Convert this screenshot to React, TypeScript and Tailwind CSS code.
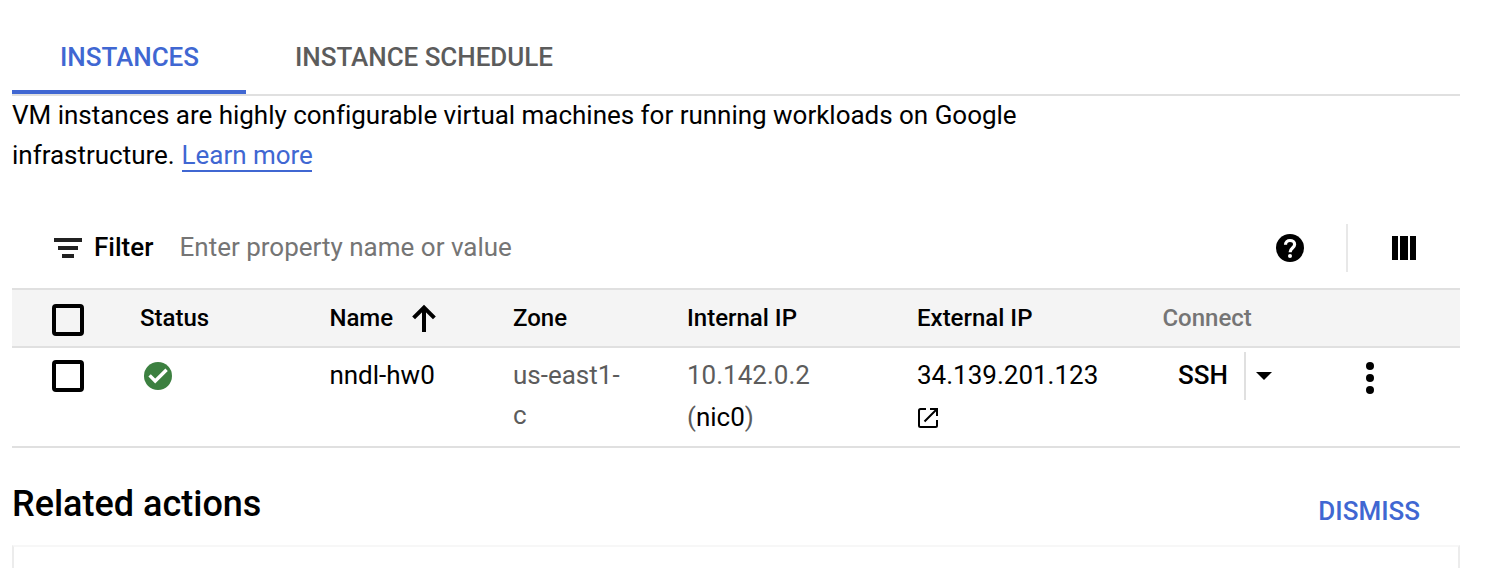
import React from "react";

const columns =
  "grid grid-cols-[128px_189px_184px_174px_230px_245px_1fr] items-start";

function Checkbox({ label }: { label: string }) {
  return (
    <button
      type="button"
      role="checkbox"
      aria-checked="false"
      aria-label={label}
      className="ml-10 block size-8 rounded-[4px] border-4 border-black"
    />
  );
}

function FilterIcon() {
  return (
    <svg className="ml-[42px] h-5 w-7" viewBox="0 0 28 20" fill="#212121">
      <path d="M0 0h28v4H0zM4 8h20v4H4zM8 16h12v4H8z" />
    </svg>
  );
}

function HelpIcon() {
  return (
    <svg className="size-7" viewBox="0 0 28 28">
      <circle cx="14" cy="14" r="14" />
      <path
        d="M9.500 10.700C9.500 8 11.500 6.500 14 6.500s4.600 1.600 4.600 4c0 3.300-4.500 3.700-4.500 7.700"
        fill="none"
        stroke="#fff"
        strokeWidth="3.200"
      />
      <circle cx="14" cy="22" r="2" fill="#fff" />
    </svg>
  );
}

function ColumnsIcon() {
  return (
    <svg className="size-6" viewBox="0 0 24 24">
      <path d="M0 0h6v24H0zM8 0h8v24H8zM18 0h6v24h-6z" />
    </svg>
  );
}

function ArrowUpIcon() {
  return (
    <svg className="ml-[19px] h-7 w-6" viewBox="0 0 24 28">
      <path
        d="M12 28V3.500M1.600 13.900 12 3.500l10.400 10.400"
        fill="none"
        stroke="#000"
        strokeWidth="4"
      />
    </svg>
  );
}

function StatusIcon() {
  return (
    <svg className="size-7" viewBox="0 0 28 28">
      <circle cx="14" cy="14" r="14" fill="#3c8040" />
      <path
        d="M5.600 13.400 11.200 19 22.600 7.800"
        fill="none"
        stroke="#fff"
        strokeWidth="3.400"
      />
    </svg>
  );
}

function OpenIcon() {
  return (
    <svg className="ml-px size-5" viewBox="0 0 20 20">
      <path
        d="M8 1H2.500Q1 1 1 2.500v15Q1 19 2.500 19h15q1.500 0 1.500-1.500V12M12 1h7v7M19 1 6.500 13.500"
        fill="none"
        stroke="#000"
        strokeWidth="2"
      />
    </svg>
  );
}

export default function App() {
  return (
    <div className="h-[568px] w-[1508px] overflow-hidden bg-white pr-12 pl-3 font-[Roboto,sans-serif] text-[26px] text-black">
      <nav className="flex h-24 border-b-2 border-[#e0e0e0] font-medium tracking-[-0.04px]">
        <div className="flex h-[94px] w-[234px] justify-center border-b-4 border-[#4067d2] pt-[37px] pl-px leading-10 text-[#4067d2]">
          INSTANCES
        </div>
        <div className="pt-[37px] pl-[49px] leading-10 text-[#5c5c5c]">
          INSTANCE SCHEDULE
        </div>
      </nav>

      <p className="-mt-px h-[113px] leading-10 tracking-[-0.02px]">
        VM instances are highly configurable virtual machines for running
        workloads on Google
        <br />
        infrastructure.{" "}
        <a
          href="#learn"
          className="ml-[0.5px] inline-block h-[37px] w-[130px] border-b-2 border-[#4067d2] whitespace-nowrap text-[#4067d2]"
        >
          Learn more
        </a>
      </p>

      <section>
        <div className="flex h-20 items-center">
          <FilterIcon />
          <span className="ml-3 w-[85.500px] pb-0.5 font-medium">Filter</span>
          <span className="flex-1 pb-0.5 text-[#757575]">
            Enter property name or value
          </span>
          <HelpIcon />
          <div className="ml-[42px] h-12 w-0.5 bg-[#e8e8e8]" />
          <div className="mr-11 ml-11">
            <ColumnsIcon />
          </div>
        </div>

        <div
          className={`${columns} h-[60px] border-y-2 border-[#e0e0e0] bg-[#f4f4f4] text-2xl leading-[56px] font-medium`}
        >
          <div className="pt-3.5">
            <Checkbox label="Select all" />
          </div>
          <div>Status</div>
          <div className="flex items-center pl-[0.4px]">
            Name
            <ArrowUpIcon />
          </div>
          <div>Zone</div>
          <div>Internal IP</div>
          <div>External IP</div>
          <div className="pl-[0.4px] text-[#757575]">Connect</div>
        </div>

        <div
          className={`${columns} h-[100px] border-b-2 border-[#e0e0e0] pt-[7px] leading-10`}
        >
          <div className="pt-[5px]">
            <Checkbox label="Select nndl-hw0" />
          </div>
          <div className="pt-[7px] pl-1">
            <StatusIcon />
          </div>
          <div className="pl-[0.4px]">nndl-hw0</div>
          <div className="text-[#5c5c5c]">
            us-east1-
            <br />c
          </div>
          <div className="text-[#5c5c5c]">
            10.142.0.2
            <div className="pt-0.5">
              (<span className="text-black">nic0</span>)
            </div>
          </div>
          <div>
            34.139.201.123
            <div className="pt-[13px]">
              <OpenIcon />
            </div>
          </div>
          <div className="flex">
            <span className="w-[82px] pl-4 font-medium">SSH</span>
            <div className="-mt-[3px] h-12 w-0.5 bg-[#e0e0e0]" />
            <svg className="mt-[17px] ml-2.5 h-2 w-4" viewBox="0 0 16 8">
              <path d="M0 0h16L8 8z" />
            </svg>
            <svg className="mt-[7px] ml-[94px] h-8 w-2" viewBox="0 0 8 32">
              <circle cx="4" cy="4" r="4" />
              <circle cx="4" cy="16" r="4" />
              <circle cx="4" cy="28" r="4" />
            </svg>
          </div>
        </div>
      </section>

      <section>
        <div className="flex h-[97px] justify-between pr-10">
          <h2 className="pt-8 text-4xl leading-12 font-medium">
            Related actions
          </h2>
          <span className="pt-[43px] leading-10 font-medium text-[#4067d2]">
            DISMISS
          </span>
        </div>
        <div className="h-40 border-x-2 border-t-2 border-x-[#ececec] border-t-[#f7f7f7]" />
      </section>
    </div>
  );
}
